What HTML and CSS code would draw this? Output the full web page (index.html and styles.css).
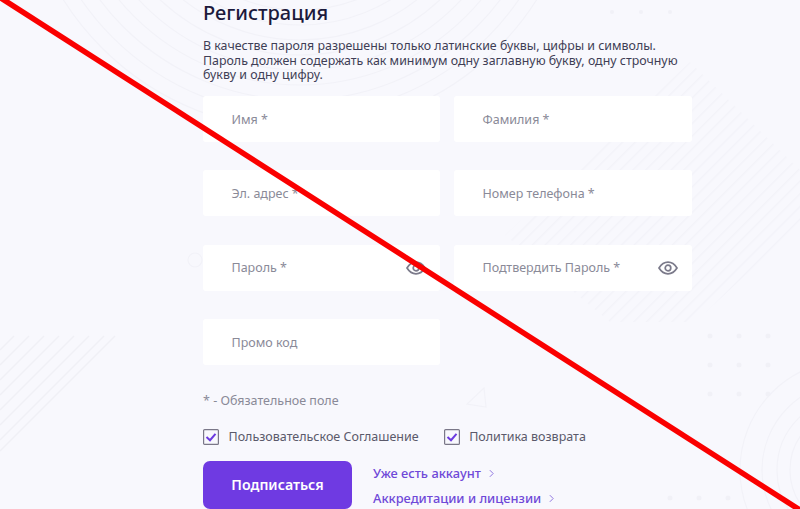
FILE: index.html
```html
<!DOCTYPE html>
<html lang="ru">
<head>
<meta charset="utf-8">
<title>Регистрация</title>
<link rel="stylesheet" href="styles.css">
</head>
<body>
<svg class="backdrop" viewBox="0 0 800 509" aria-hidden="true">
  <defs>
    <pattern id="hatch" width="9" height="9" patternUnits="userSpaceOnUse" patternTransform="rotate(45)">
      <line x1="0" y1="0" x2="0" y2="9" class="hatch-line"/>
    </pattern>
  </defs>
  <polygon class="hatch-area" points="690,62 800,170 800,225 695,322 610,322 505,235"/>
  <g class="deco-arcs">
    <circle cx="300" cy="-150" r="160"/><circle cx="300" cy="-150" r="175"/><circle cx="300" cy="-150" r="190"/><circle cx="300" cy="-150" r="205"/><circle cx="300" cy="-150" r="220"/><circle cx="300" cy="-150" r="235"/><circle cx="300" cy="-150" r="250"/><circle cx="300" cy="-150" r="265"/><circle cx="300" cy="-150" r="280"/>
    <circle cx="850" cy="470" r="60"/><circle cx="850" cy="470" r="73"/><circle cx="850" cy="470" r="88"/><circle cx="850" cy="470" r="110"/>
    <circle cx="195" cy="260" r="7"/>
    <path d="M484 388 L467 404 L486 407 Z"/>
  </g>
  <path class="deco-lines" d="M0 350 L14 336M0 365 L29 336M0 380 L44 336M0 395 L59 336M0 410 L74 336M0 425 L89 336M0 440 L104 336M0 451 L115 336"/>
  <g class="deco-dots">
    <circle cx="612" cy="12" r="2"/><circle cx="641" cy="12" r="2"/><circle cx="670" cy="12" r="2"/>
    <circle cx="710" cy="336" r="2.500"/><circle cx="739" cy="336" r="2.500"/><circle cx="768" cy="336" r="2.500"/>
    <circle cx="710" cy="365" r="2.500"/><circle cx="739" cy="365" r="2.500"/><circle cx="768" cy="365" r="2.500"/>
    <circle cx="710" cy="394" r="2.500"/><circle cx="739" cy="394" r="2.500"/><circle cx="768" cy="394" r="2.500"/>
    <circle cx="670" cy="498" r="2.500"/><circle cx="699" cy="498" r="2.500"/><circle cx="728" cy="498" r="2.500"/>
  </g>
</svg>

<main class="panel">
  <h1 class="title">Регистрация</h1>
  <p class="note">В качестве пароля разрешены только латинские буквы, цифры и символы.<br>Пароль должен содержать как минимум одну заглавную букву, одну строчную<br>букву и одну цифру.</p>

  <form class="fields">
    <div class="field"><span class="hint">Имя *</span></div>
    <div class="field"><span class="hint">Фамилия *</span></div>
    <div class="field"><span class="hint">Эл. адрес *</span></div>
    <div class="field"><span class="hint">Номер телефона *</span></div>
    <div class="field"><span class="hint">Пароль *</span>
      <svg class="eye" viewBox="0 0 20 14"><path d="M1 7C3.500 3 6.500 1.200 10 1.200S16.500 3 19 7C16.500 11 13.500 12.800 10 12.800S3.500 11 1 7Z"/><circle cx="10" cy="7" r="2.800"/></svg>
    </div>
    <div class="field"><span class="hint">Подтвердить Пароль *</span>
      <svg class="eye" viewBox="0 0 20 14"><path d="M1 7C3.500 3 6.500 1.200 10 1.200S16.500 3 19 7C16.500 11 13.500 12.800 10 12.800S3.500 11 1 7Z"/><circle cx="10" cy="7" r="2.800"/></svg>
    </div>
    <div class="field"><span class="hint">Промо код</span></div>
  </form>

  <p class="required">* - Обязательное поле</p>

  <div class="checks">
    <div class="check">
      <svg class="box" viewBox="0 0 16 16"><rect x="0.600" y="0.600" width="14.800" height="14.800" rx="1"/><path d="M3.500 8L7 11.200L12.500 4.800"/></svg>
      <span>Пользовательское Соглашение</span>
    </div>
    <div class="check">
      <svg class="box" viewBox="0 0 16 16"><rect x="0.600" y="0.600" width="14.800" height="14.800" rx="1"/><path d="M3.500 8L7 11.200L12.500 4.800"/></svg>
      <span>Политика возврата</span>
    </div>
  </div>

  <div class="actions">
    <button class="submit" type="button">Подписаться</button>
    <div class="links">
      <a class="link">Уже есть аккаунт<svg class="chev" viewBox="0 0 6 10"><path d="M1 1L5 5L1 9"/></svg></a>
      <a class="link">Аккредитации и лицензии<svg class="chev" viewBox="0 0 6 10"><path d="M1 1L5 5L1 9"/></svg></a>
    </div>
  </div>
</main>

<svg class="strike" viewBox="0 0 800 509" aria-hidden="true"><path d="M-10 -9L810 516.500"/></svg>
</body>
</html>
```

FILE: styles.css
```css
* { box-sizing: border-box; }

html, body {
  margin: 0;
  height: 509px;
  overflow: hidden;
}

body {
  position: relative;
  background: #f8f8fd;
  font-family: "Noto Sans", "Open Sans", sans-serif;
  color: #3b3a52;
}

.backdrop, .strike {
  position: absolute;
  left: 0;
  top: 0;
  width: 800px;
  height: 509px;
  pointer-events: none;
}

.deco-arcs { fill: none; stroke: #f2f2f8; stroke-width: 1.200; }
.deco-lines { fill: none; stroke: #f0f0f6; stroke-width: 1.500; }
.deco-dots { fill: #f1f1f7; }
.hatch-area { fill: url(#hatch); }
.hatch-line { stroke: #f3f3f9; stroke-width: 3; }

.strike { z-index: 2; }
.strike path { fill: none; stroke: #fa0000; stroke-width: 5.500; }

.panel {
  position: relative;
  width: 489px;
  margin-left: 203px;
}

.title {
  margin: 0;
  font-size: 20px;
  line-height: 25px;
  font-weight: 500;
  color: #1c1a3c;
}

.note {
  margin: 14px 0 0;
  font-size: 12.400px;
  line-height: 14.500px;
  color: #3f3e56;
  white-space: nowrap;
}

.fields {
  display: grid;
  grid-template-columns: 237px 238px;
  column-gap: 14px;
  row-gap: 28.400px;
  margin-top: 13.500px;
}

.field {
  display: flex;
  align-items: center;
  justify-content: space-between;
  height: 46px;
  padding: 0 14px 0 28.500px;
  background: #fff;
  border-radius: 3px;
}

.hint {
  font-size: 12.500px;
  color: #8a8a98;
}

.eye {
  width: 20px;
  height: 14px;
  fill: none;
  stroke: #7b7a8a;
  stroke-width: 1.700;
}

.required {
  margin: 27px 0 0;
  font-size: 12.500px;
  line-height: 17px;
  color: #8a8a98;
}

.checks {
  display: flex;
  gap: 25px;
  margin-top: 20px;
}

.check {
  display: flex;
  align-items: center;
  gap: 9.500px;
  font-size: 12.500px;
  line-height: 16px;
  color: #5b5a6b;
}

.box {
  width: 16px;
  height: 16px;
  flex: none;
}

.box rect { fill: none; stroke: #7a7788; stroke-width: 1.200; }
.box path { fill: none; stroke: #6c3be0; stroke-width: 2; }

.actions {
  display: flex;
  gap: 21px;
  margin-top: 15.500px;
}

.submit {
  width: 149px;
  height: 48px;
  flex: none;
  border: 0;
  border-radius: 7px;
  background: #6f3ae2;
  color: #fff;
  font: 600 14.200px "Noto Sans", "Open Sans", sans-serif;
}

.links {
  display: flex;
  flex-direction: column;
  gap: 7px;
  padding-top: 3.500px;
}

.link {
  display: flex;
  align-items: center;
  gap: 8px;
  font-size: 12.850px;
  line-height: 18px;
  font-weight: 500;
  color: #6f49d8;
}

.chev {
  width: 5px;
  height: 9px;
  fill: none;
  stroke: #8f76e0;
  stroke-width: 1.200;
}
```
